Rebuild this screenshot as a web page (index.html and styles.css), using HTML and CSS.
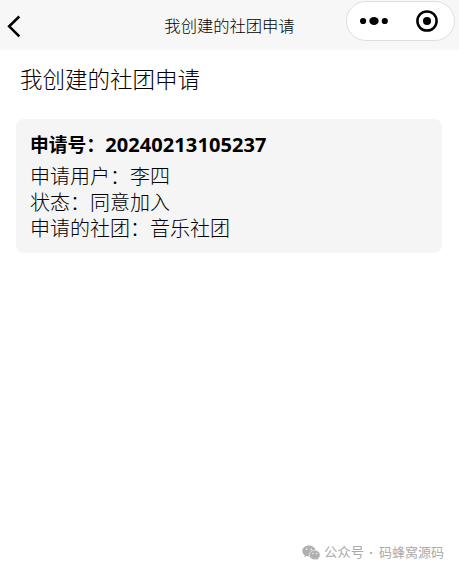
FILE: index.html
```html
<!DOCTYPE html>
<html lang="zh-CN">
<head>
<meta charset="UTF-8">
<meta name="viewport" content="width=device-width, initial-scale=1.0">
<title>我创建的社团申请</title>
<link rel="stylesheet" href="styles.css">
</head>
<body>

<header class="navbar">
    <svg class="back" width="14" height="24" viewBox="0 0 14 24">
        <path d="M12.3 2.5 2.2 12.3 12.3 22.3" fill="none" stroke="#000" stroke-width="2.6"/>
    </svg>
    <div class="navbar-title">我创建的社团申请</div>
    <div class="capsule">
        <svg width="28" height="10" viewBox="0 0 28 10">
            <circle cx="3.1" cy="5" r="3.1"/>
            <ellipse cx="14" cy="5" rx="4.7" ry="4"/>
            <circle cx="24.8" cy="5" r="3.1"/>
        </svg>
        <svg width="22" height="22" viewBox="0 0 22 22">
            <circle cx="11" cy="11" r="9.6" fill="none" stroke="#000" stroke-width="2.5"/>
            <circle cx="11" cy="11" r="4"/>
        </svg>
    </div>
</header>

<main class="page">
    <h1 class="page-title">我创建的社团申请</h1>
    <div class="card">
        <div class="card-title">申请号：<span class="number">20240213105237</span></div>
        <div class="card-row">申请用户：李四</div>
        <div class="card-row">状态：同意加入</div>
        <div class="card-row">申请的社团：音乐社团</div>
    </div>
</main>

<footer class="source">
    <svg width="19" height="16" viewBox="0 0 19 16">
        <path d="M7 .5C3.2.5.3 2.9.3 6c0 1.8 1 3.3 2.5 4.3l-.6 2 2.3-1.2c.8.2 1.6.4 2.5.4 3.8 0 6.700-2.500 6.700-5.500S10.800.5 7 .5z" fill="#b0b0b0"/>
        <path d="M12.700 5.300c-3.100 0-5.500 2-5.500 4.700s2.400 4.700 5.500 4.700c.7 0 1.300-.1 1.900-.3l1.900 1-.5-1.700c1.300-.9 2.200-2.200 2.200-3.700 0-2.700-2.400-4.700-5.500-4.700z" fill="#b0b0b0" stroke="#fff" stroke-width=".6"/>
        <g fill="#fff">
            <circle cx="4.700" cy="4.300" r=".8"/>
            <circle cx="9.100" cy="4.300" r=".8"/>
            <circle cx="10.900" cy="8.600" r=".7"/>
            <circle cx="14.600" cy="8.600" r=".7"/>
        </g>
    </svg>
    <span class="source-label">公众号</span>
    <span class="source-dot">·</span>
    <span class="source-name">码蜂窝源码</span>
</footer>

</body>
</html>
```
FILE: styles.css
```css
* {
    box-sizing: border-box;
}

body {
    margin: 0;
    height: 572px;
    display: flex;
    flex-direction: column;
    background-color: #ffffff;
    color: #000000;
    font-family: "Liberation Sans", "Noto Sans CJK SC", sans-serif;
    font-weight: 300;
    overflow: hidden;
}

.navbar {
    height: 50px;
    flex: none;
    display: grid;
    grid-template-columns: 1fr auto 1fr;
    align-items: start;
    padding: 1px 7px 0 7px;
    background-color: #f7f7f7;
}

.back {
    margin-top: 13px;
}

.navbar-title {
    margin-top: 13px;
    font-family: "Noto Sans CJK SC", sans-serif;
    font-size: 16.3px;
    line-height: 22px;
}

.capsule {
    justify-self: end;
    width: 109px;
    height: 40px;
    margin-right: -3px;
    display: flex;
    align-items: center;
    justify-content: space-between;
    padding: 0 16px 0 13px;
    border: 1px solid #dedede;
    border-radius: 20px;
    background-color: #ffffff;
}

.page {
    flex: 1;
    padding: 15px 17px 0 16px;
}

.page-title {
    margin: 0 0 22px 4px;
    font-size: 22.5px;
    font-weight: 300;
    line-height: 32px;
}

.card {
    height: 134px;
    padding: 12px 14px;
    border-radius: 8px;
    background-color: #f5f5f5;
}

.card-title {
    margin-bottom: 4px;
    font-size: 18.8px;
    font-weight: bold;
    line-height: 28px;
}

.number {
    font-family: "Open Sans", "Noto Sans", sans-serif;
    font-size: 20px;
    letter-spacing: 0.1px;
}

.card-row {
    font-size: 20px;
    line-height: 26px;
}

.source {
    display: flex;
    align-items: center;
    justify-content: flex-end;
    padding: 0 15px 8px 0;
    color: #aaaaaa;
    font-size: 13px;
    font-weight: 400;
    line-height: 22px;
}

.source-label {
    margin-left: 3px;
    font-size: 13.3px;
}

.source-dot {
    width: 15px;
    text-align: center;
    font-weight: bold;
}
```
